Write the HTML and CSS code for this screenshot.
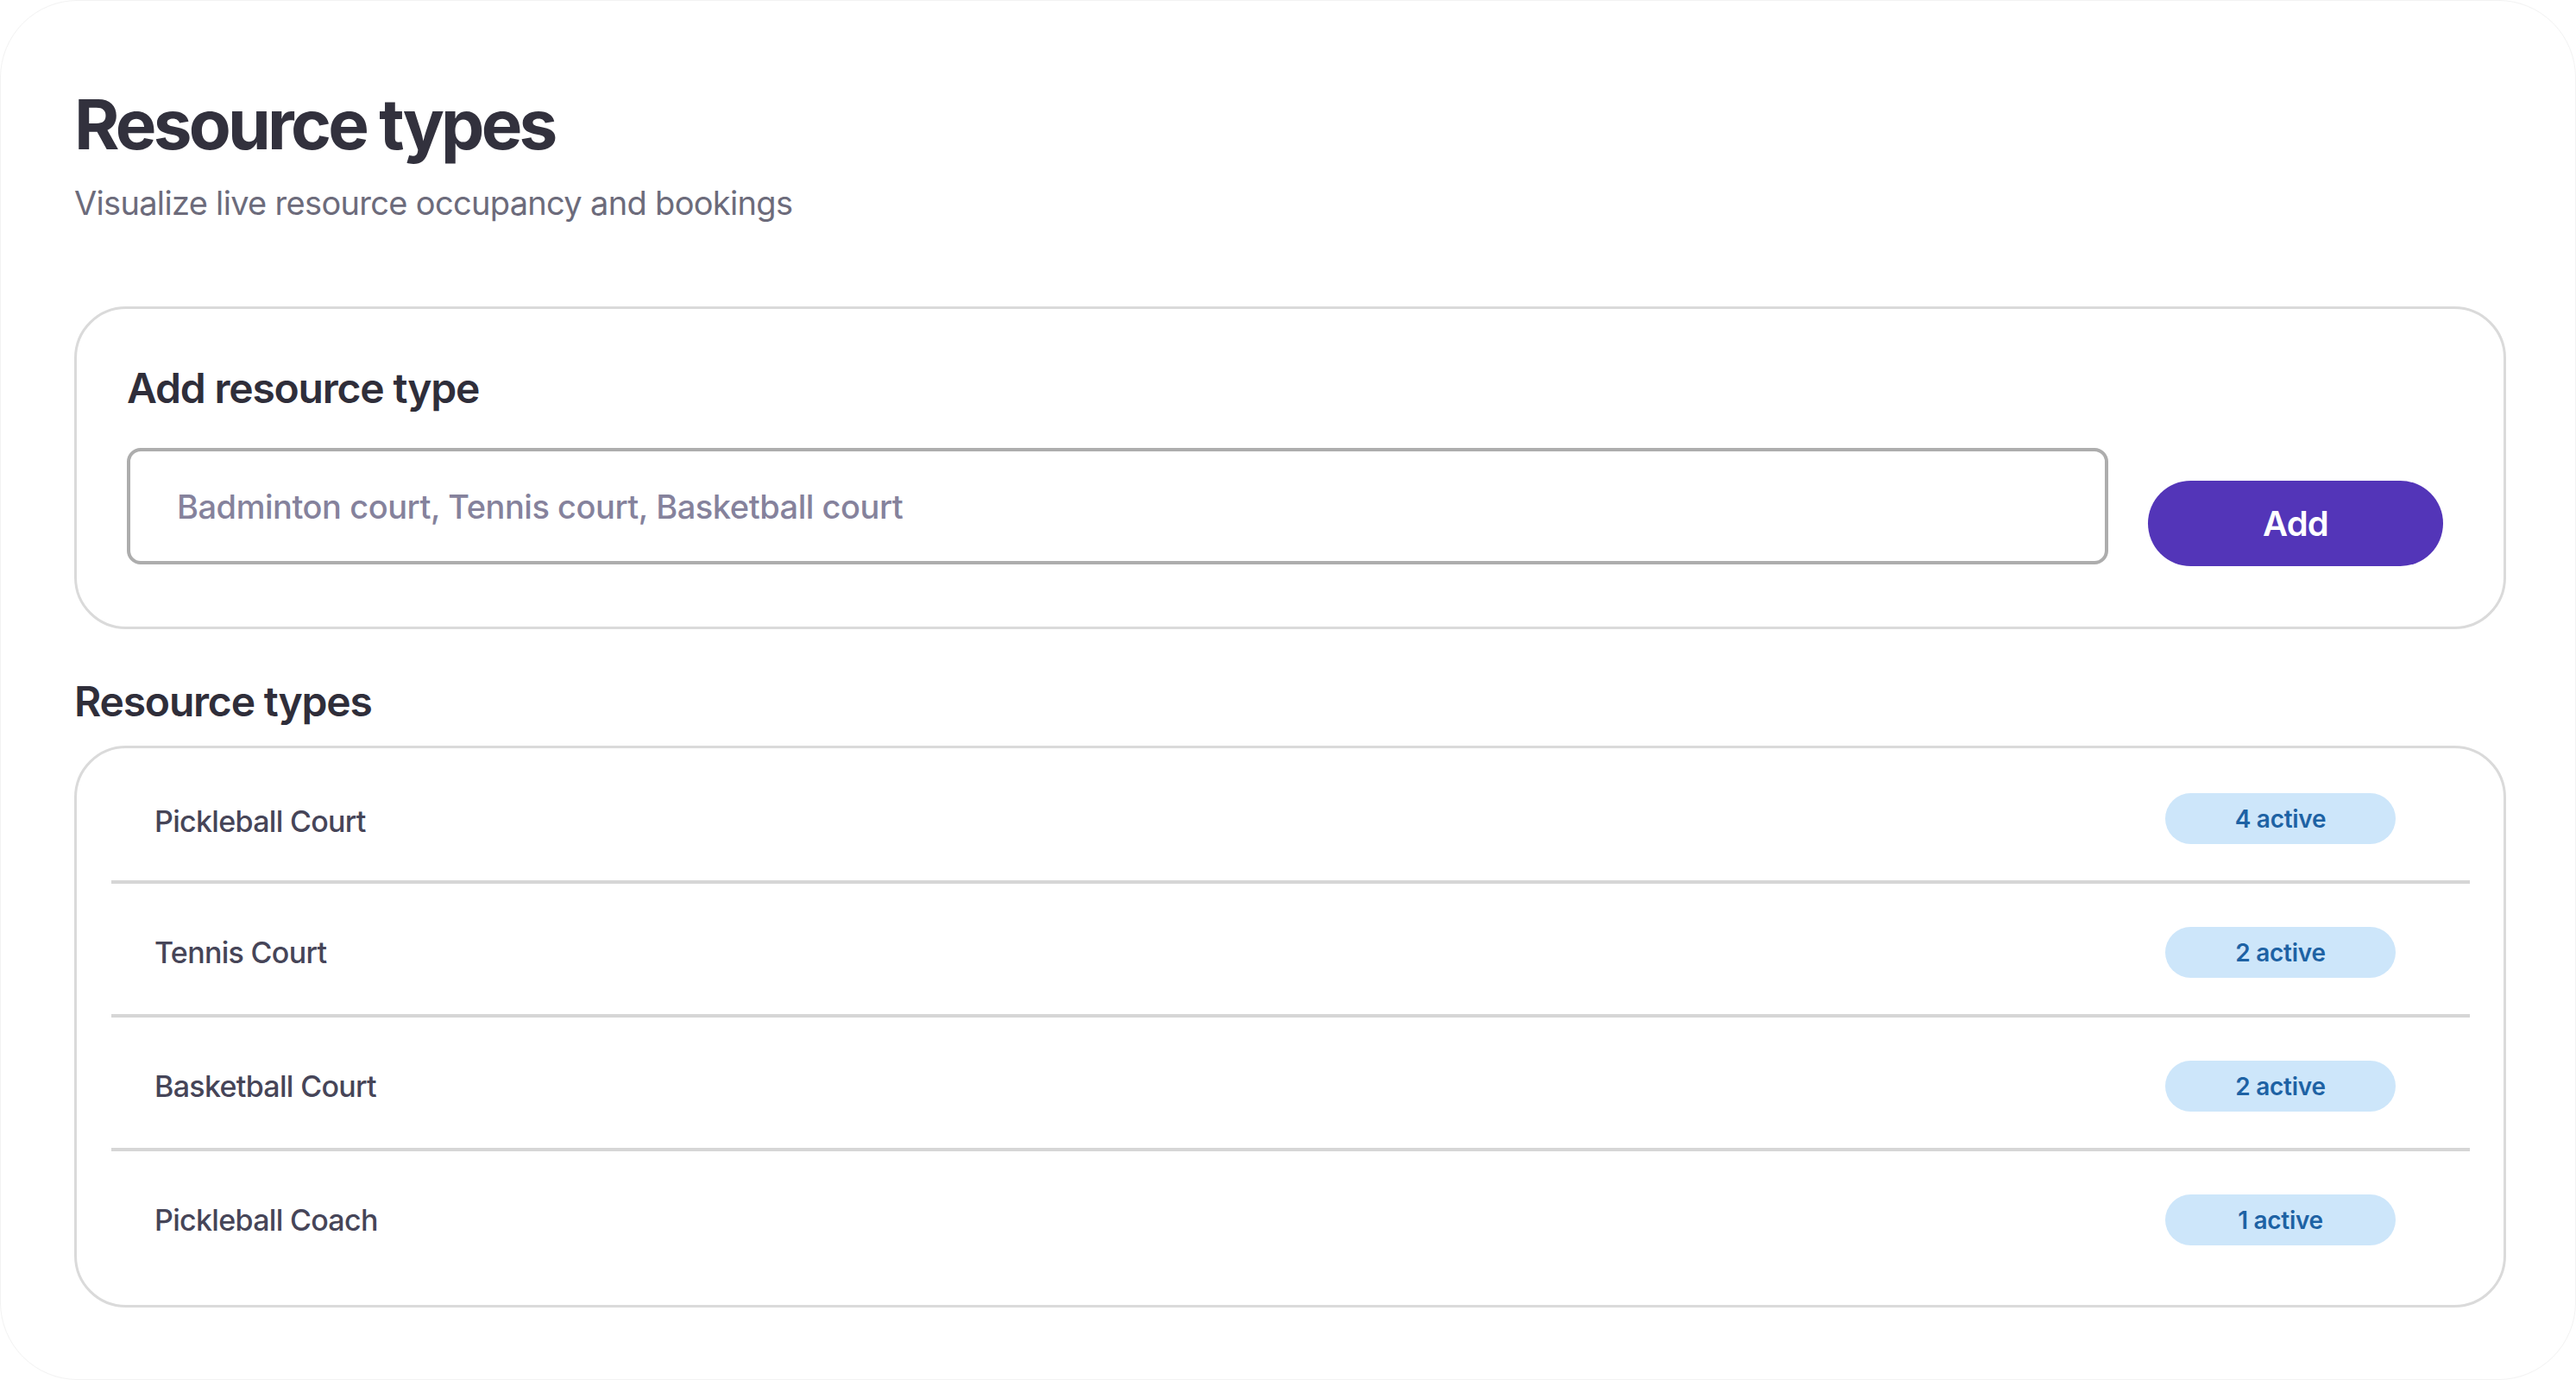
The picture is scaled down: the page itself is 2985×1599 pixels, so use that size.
FILE: index.html
```html
<!DOCTYPE html>
<html lang="en">
<head>
    <meta charset="UTF-8">
    <meta name="viewport" content="width=device-width, initial-scale=1.0">
    <title>Resource types</title>
    <link rel="stylesheet" href="styles.css">
</head>
<body>
    <div class="page">
        <!-- page header -->
        <h1 class="title">Resource types</h1>
        <p class="subtitle">Visualize live resource occupancy and bookings</p>

        <!-- add form -->
        <div class="card addcard">
            <h2 class="cardtitle">Add resource type</h2>
            <div class="addrow">
                <input class="typeinput" type="text" placeholder="Badminton court, Tennis court, Basketball court">
                <button class="addbtn">Add</button>
            </div>
        </div>

        <!-- existing types -->
        <h2 class="sectiontitle">Resource types</h2>
        <div class="card listcard">
            <div class="row">
                <span class="rowname">Pickleball Court</span>
                <span class="badge">4 active</span>
            </div>
            <div class="row">
                <span class="rowname">Tennis Court</span>
                <span class="badge">2 active</span>
            </div>
            <div class="row">
                <span class="rowname">Basketball Court</span>
                <span class="badge">2 active</span>
            </div>
            <div class="row">
                <span class="rowname">Pickleball Coach</span>
                <span class="badge">1 active</span>
            </div>
        </div>
    </div>
</body>
</html>
```

FILE: styles.css
```css
*{
    margin: 0px;
    padding: 0px;
    box-sizing: border-box;
}

body{
    font-family: Inter, "Noto Sans", sans-serif;
    background: #ffffff;
    color: #32313d;
}

.page{
    min-height: 100vh;
    padding: 95px 80px 0 85px;
    border: 1px solid #f2f2f2;
    border-radius: 90px;
}

.title{
    font-size: 80px;
    line-height: 96px;
    font-weight: 700;
    letter-spacing: -0.047em;
    color: #32313d;
}

.subtitle{
    margin-top: 20px;
    font-size: 38px;
    line-height: 46px;
    font-weight: 400;
    letter-spacing: -0.018em;
    color: #6c6b7b;
}

.card{
    border: 3px solid #dadada;
    border-radius: 60px;
    background: #ffffff;
}

.addcard{
    margin-top: 97px;
    padding: 63px 70px 72px 58px;
}

.cardtitle,
.sectiontitle{
    font-size: 48px;
    line-height: 58px;
    font-weight: 600;
    letter-spacing: -0.025em;
    color: #2f2e3a;
}

.addrow{
    display: flex;
    align-items: flex-end;
    gap: 46px;
    margin-top: 40px;
}

.typeinput{
    flex: 1;
    height: 135px;
    padding: 0 54px;
    border: 4px solid #adadad;
    border-radius: 16px;
    font-family: inherit;
    font-size: 38px;
    font-weight: 500;
    letter-spacing: -0.012em;
    color: #32313d;
    outline: none;
}

.typeinput::placeholder{
    color: #85829c;
}

.addbtn{
    width: 342px;
    height: 99px;
    margin-bottom: -2px;
    border: none;
    border-radius: 50px;
    background: #5335b8;
    color: #ffffff;
    font-family: inherit;
    font-size: 40px;
    font-weight: 600;
    letter-spacing: -0.02em;
}

.sectiontitle{
    margin-top: 55px;
}

.listcard{
    margin-top: 22px;
    padding: 2px 39px 27px 40px;
}

.row{
    display: flex;
    justify-content: space-between;
    align-items: center;
    height: 155px;
    padding: 8px 86px 0 50px;
    border-bottom: 4px solid #d6d6d6;
}

.row:first-child .rowname{
    margin-top: 6px;
}

.row:last-child{
    height: 151px;
    border-bottom: none;
}

.rowname{
    font-size: 34px;
    font-weight: 500;
    letter-spacing: -0.02em;
    color: #464558;
}

.badge{
    display: flex;
    align-items: center;
    justify-content: center;
    width: 267px;
    height: 59px;
    border-radius: 30px;
    background: #cde6fa;
    color: #1d62a4;
    font-size: 28px;
    font-weight: 600;
    letter-spacing: -0.01em;
}
```
